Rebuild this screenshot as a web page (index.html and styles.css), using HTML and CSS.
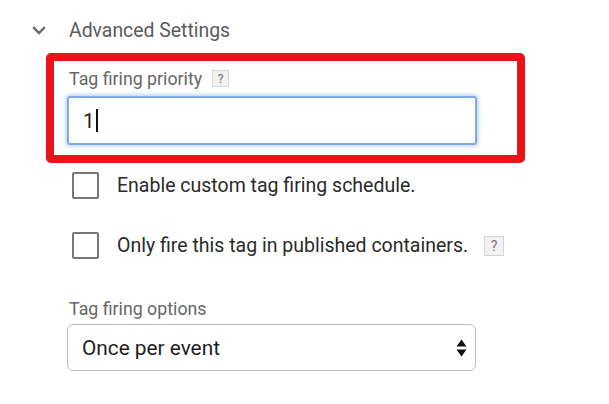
FILE: index.html
```html
<!DOCTYPE html>
<html>
<head>
<meta charset="utf-8">
<link rel="stylesheet" href="styles.css">
</head>
<body>
<div class="page">
  <div class="section-head">
    <svg class="chevron" width="14" height="9" viewBox="0 0 14 9"><path d="M1.2 1.2 L7 7 L12.8 1.2" fill="none" stroke="#6b6b6b" stroke-width="2.4"/></svg>
    <span class="section-title">Advanced Settings</span>
  </div>
  <div class="highlight">
    <div class="field-label">Tag firing priority <span class="help">?</span></div>
    <div class="text-input"><span class="value">1</span><span class="caret"></span></div>
  </div>
  <div class="check-row">
    <span class="checkbox"></span>
    <span class="check-text">Enable custom tag firing schedule.</span>
  </div>
  <div class="check-row second">
    <span class="checkbox"></span>
    <span class="check-text">Only fire this tag in published containers.</span>
    <span class="help help-right">?</span>
  </div>
  <div class="options">
    <div class="field-label plain">Tag firing options</div>
    <div class="select">
      <span class="select-text">Once per event</span>
      <svg class="arrows" width="11" height="18" viewBox="0 0 11 18"><path d="M5.5 0.5 L10.5 7.5 L0.5 7.5 Z" fill="#111"/><path d="M5.5 17.5 L10.5 10.5 L0.5 10.5 Z" fill="#111"/></svg>
    </div>
  </div>
</div>
</body>
</html>
```
FILE: styles.css
```css
* { box-sizing: border-box; }
html, body { margin: 0; padding: 0; background: #fff; }
body { font-family: Roboto, "Liberation Sans", sans-serif; }
.page { width: 609px; height: 404px; padding-top: 18px; }

.section-head { display: flex; align-items: center; height: 24px; }
.chevron { margin-left: 32px; margin-right: 23px; margin-top: 1px; }
.section-title { font-size: 19.4px; color: #5b5b5b; }

.highlight {
  margin: 11px 0 0 46px;
  width: 479px;
  height: 110px;
  border: 8px solid #ec1218;
  border-radius: 5px;
  padding: 6px 0 0 13px;
}
.field-label { display: flex; align-items: center; font-size: 17.8px; color: #666; padding-left: 2px; height: 22px; }
.help {
  display: inline-flex; align-items: center; justify-content: center;
  width: 17px; height: 17px; margin-left: 10px;
  background: #f1f1f1; border: 1px solid #d6d6d6;
  font-size: 13px; color: #777;
}
.text-input {
  margin-top: 7px;
  width: 410px; height: 49px;
  border: 2px solid #7eabe6;
  border-radius: 3px;
  box-shadow: 0 0 4px 1px rgba(120,165,225,0.6);
  display: flex; align-items: center; padding-left: 14px;
}
.value { font-size: 20.5px; color: #222; }
.caret { display: inline-block; width: 2px; height: 23px; background: #111; margin-left: 1px; }

.check-row { display: flex; align-items: center; height: 27px; margin-top: 9px; }
.check-row.second { margin-top: 33px; }
.checkbox {
  width: 27px; height: 27px; margin-left: 72px; margin-right: 18px; flex: none;
  border: 2px solid #777; border-radius: 2px;
}
.check-text { font-size: 19.5px; color: #2a2a2a; white-space: nowrap; }
.help-right { margin-left: 16px; width: 20px; height: 20px; font-size: 14px; }

.options { margin-top: 38px; padding-left: 67px; }
.field-label.plain { color: #666; height: 22px; }
.select {
  margin-top: 5px;
  width: 409px; height: 47px;
  border: 1px solid #bdbdbd;
  border-radius: 6px;
  display: flex; align-items: center; justify-content: space-between;
  padding: 0 8px 0 14px;
}
.select-text { font-size: 20.8px; color: #1e1e1e; }
```
